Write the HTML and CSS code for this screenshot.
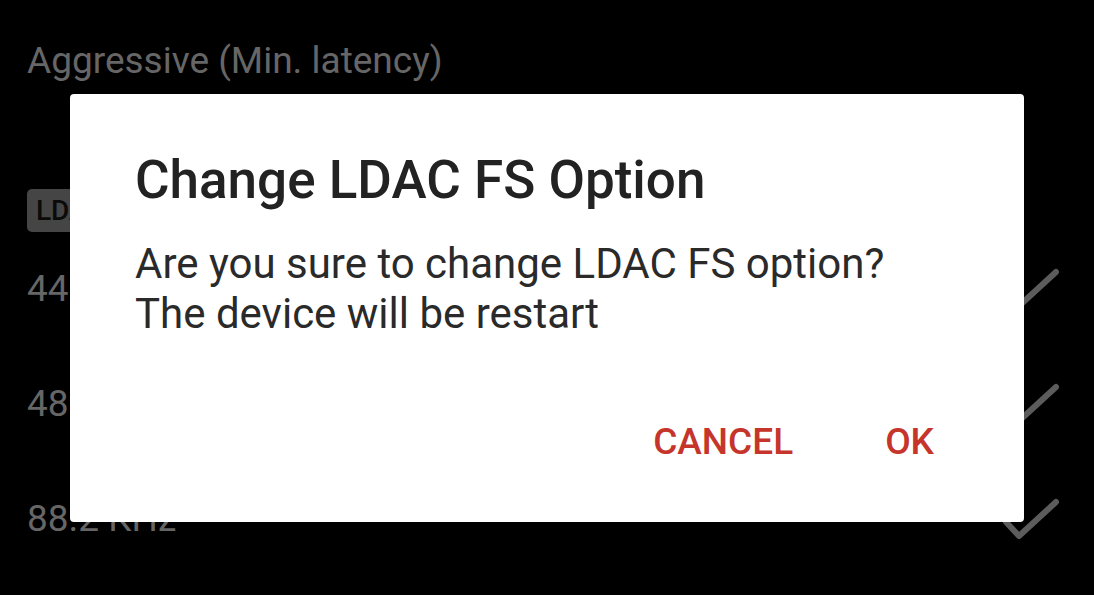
FILE: index.html
```html
<!DOCTYPE html>
<html>

<head>
    <title>LDAC</title>
    <link rel="stylesheet" href="styles.css">
</head>

<body>
    <div class="settings">
        <div class="option first">Aggressive (Min. latency)</div>
        <div class="badge">LDAC FS</div>
        <div class="option row">
            <span>44.1 KHz</span>
            <svg class="check" viewBox="0 0 60 44"><path d="M4 24 L17 38 L54 4" /></svg>
        </div>
        <div class="option row">
            <span>48 KHz</span>
            <svg class="check" viewBox="0 0 60 44"><path d="M4 24 L17 38 L54 4" /></svg>
        </div>
        <div class="option row">
            <span>88.2 KHz</span>
            <svg class="check" viewBox="0 0 60 44"><path d="M4 24 L17 38 L54 4" /></svg>
        </div>
    </div>

    <div class="dialog">
        <h1>Change LDAC FS Option</h1>
        <p>Are you sure to change LDAC FS option?<br>The device will be restart</p>
        <div class="actions">
            <button>CANCEL</button>
            <button>OK</button>
        </div>
    </div>
</body>

</html>
```

FILE: styles.css
```css
body {
    margin: 0;
    padding: 0;
    background-color: #000;
    font-family: Roboto, "Liberation Sans", sans-serif;
    width: 1094px;
    height: 595px;
    overflow: hidden;
    position: relative;
}

.settings {
    padding: 40px 0 0 27px;
    color: #666;
}

.option {
    font-size: 37px;
    line-height: 42px;
}

.first {
    margin-bottom: 107px;
}

.badge {
    display: inline-block;
    background-color: #454545;
    color: #0a0a0a;
    font-size: 28px;
    font-weight: 500;
    line-height: 43px;
    padding: 0 9px;
    border-radius: 5px;
    margin-bottom: 36px;
}

.row {
    display: flex;
    justify-content: space-between;
    align-items: flex-start;
    padding-right: 32px;
    height: 115px;
}

.check {
    width: 60px;
    height: 44px;
    fill: none;
    stroke: #5c5c5c;
    stroke-width: 6;
    stroke-linecap: round;
    stroke-linejoin: round;
}

.dialog {
    position: absolute;
    left: 70px;
    top: 94px;
    width: 954px;
    height: 428px;
    box-sizing: border-box;
    background-color: #fff;
    border-radius: 4px;
    padding: 53px 65px 0 65px;
}

.dialog h1 {
    margin: 0;
    font-size: 53px;
    font-weight: 500;
    color: #222;
    line-height: 66px;
}

.dialog p {
    margin: 26px 0 0 0;
    font-size: 42px;
    line-height: 50px;
    color: #2a2a2a;
}

.actions {
    display: flex;
    justify-content: flex-end;
    gap: 92px;
    margin-top: 82px;
    padding-right: 25px;
}

.actions button {
    background: none;
    border: none;
    padding: 0;
    font-family: Roboto, "Liberation Sans", sans-serif;
    font-size: 37px;
    font-weight: 500;
    color: #c6352b;
    line-height: 42px;
}
```
